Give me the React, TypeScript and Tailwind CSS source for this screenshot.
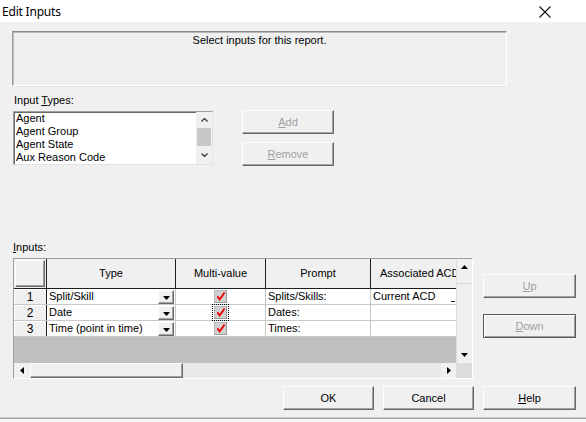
import React from "react";

const raised =
  "bg-[#f0f0f0] border border-t-white border-l-white border-r-[#696969] border-b-[#696969] shadow-[inset_-1px_-1px_0_#a0a0a0]";

function Mn({ c }: { c: string }) {
  return <span className="underline underline-offset-[1px]">{c}</span>;
}

function Btn({
  children,
  w,
  disabled,
  dark,
}: {
  children: React.ReactNode;
  w: string;
  disabled?: boolean;
  dark?: boolean;
}) {
  return (
    <div
      className={`${w} h-[24px] flex items-center justify-center text-[11px] ${
        dark
          ? "bg-[#f0f0f0] border border-[#5a5a5a] shadow-[inset_1px_1px_0_white,inset_-1px_-1px_0_#a0a0a0]"
          : raised
      } ${disabled ? "text-[#a0a0a0]" : "text-black"}`}
    >
      {children}
    </div>
  );
}

function Tri({ dir, className = "" }: { dir: "up" | "down" | "left" | "right"; className?: string }) {
  const pts = {
    up: "0,4 7,4 3.5,0",
    down: "0,0 7,0 3.5,4",
    left: "4,0 4,7 0,3.5",
    right: "0,0 0,7 4,3.5",
  }[dir];
  const vb = dir === "up" || dir === "down" ? "0 0 7 4" : "0 0 4 7";
  const size = dir === "up" || dir === "down" ? "w-[7px] h-[4px]" : "w-[4px] h-[7px]";
  return (
    <svg viewBox={vb} className={`${size} ${className}`}>
      <polygon points={pts} fill="#000" />
    </svg>
  );
}

function Check({ focus }: { focus?: boolean }) {
  return (
    <div className={`p-[1px] ${focus ? "outline outline-1 outline-dotted outline-black" : ""}`}>
      <svg viewBox="0 0 13 13" className="w-[13px] h-[13px] block">
        <rect x="0" y="0" width="13" height="13" fill="#b8b8b8" />
        <rect x="1" y="1" width="11" height="11" fill="#d0d0d0" />
        <line x1="0" y1="12.5" x2="13" y2="12.5" stroke="#9a9a9a" />
        <line x1="12.5" y1="0" x2="12.5" y2="13" stroke="#9a9a9a" />
        <path d="M3.4 6.4 L5.6 9.4 L10.6 2.4" stroke="#ee0000" strokeWidth="1.8" fill="none" />
      </svg>
    </div>
  );
}

const rows = [
  { n: "1", type: "Split/Skill", prompt: "Splits/Skills:", acd: "Current ACD" },
  { n: "2", type: "Date", prompt: "Dates:", acd: "" },
  { n: "3", type: "Time (point in time)", prompt: "Times:", acd: "" },
];

export default function App() {
  return (
    <div className="w-[586px] h-[422px] flex flex-col bg-[#f0f0f0] overflow-hidden font-['Liberation_Sans',Arial,sans-serif] text-black">
      {/* title bar */}
      <div className="h-[22px] bg-white flex items-center justify-between shrink-0">
        <span className="pl-[2px] pt-[1px] text-[12px] leading-none font-['Noto_Sans','Liberation_Sans',sans-serif] tracking-[-0.2px]">
          Edit Inputs
        </span>
        <svg viewBox="0 0 12 12" className="w-[12px] h-[12px] mr-[35px] mt-[2px]">
          <path d="M0.5 0.5 L11.5 11.5 M11.5 0.5 L0.5 11.5" stroke="#111" strokeWidth="1.1" />
        </svg>
      </div>

      <div className="flex-1 px-[12px] pt-[9px] text-[11px]">
        {/* description box */}
        <div className="w-[495px] h-[55px] border border-t-[#8a8a8a] border-l-[#a0a0a0] border-b-white border-r-white shadow-[inset_1px_1px_0_#b9b9b9,0_1px_0_#e3e3e3] flex justify-center pt-[2px] leading-[13px]">
          Select inputs for this report.
        </div>

        <div className="mt-[8px] pl-[2px] h-[13px] leading-[13px]">
          Input <Mn c="T" />ypes:
        </div>

        <div className="mt-[3px] flex">
          <div className="ml-[1px] mt-[1px] w-[200px] h-[54px] bg-white border border-t-[#a0a0a0] border-l-[#a0a0a0] border-b-[#e3e3e3] border-r-[#e3e3e3] shadow-[inset_1px_1px_0_#696969] flex">
            <div className="flex-1 pl-[2px]">
              {["Agent", "Agent Group", "Agent State", "Aux Reason Code"].map((t) => (
                <div key={t} className="h-[13px] leading-[13px]">
                  {t}
                </div>
              ))}
            </div>
            <div className="w-[16px] flex flex-col items-stretch bg-[#f0f0f0]">
              <div className="h-[16px] flex items-center justify-center">
                <svg viewBox="0 0 7 4" className="w-[7px] h-[4px]">
                  <polyline points="0.5,3.5 3.5,0.5 6.5,3.5" fill="none" stroke="#333" strokeWidth="1.2" />
                </svg>
              </div>
              <div className="h-[18px] bg-[#c8c8c8] mx-[1px]" />
              <div className="flex-1 flex items-center justify-center">
                <svg viewBox="0 0 7 4" className="w-[7px] h-[4px]">
                  <polyline points="0.5,0.5 3.5,3.5 6.5,0.5" fill="none" stroke="#333" strokeWidth="1.2" />
                </svg>
              </div>
            </div>
          </div>

          <div className="ml-[29px] flex flex-col gap-[8px]">
            <Btn w="w-[92px]" disabled>
              <Mn c="A" />dd
            </Btn>
            <Btn w="w-[92px]" disabled>
              <Mn c="R" />emove
            </Btn>
          </div>
        </div>

        <div className="mt-[75px] pl-[1px] h-[13px] leading-[13px]">
          <Mn c="I" />nputs:
        </div>

        <div className="mt-[4px] flex">
          {/* grid */}
          <div className="ml-[1px] w-[460px] h-[121px] border border-t-[#a0a0a0] border-l-[#a0a0a0] border-b-white border-r-white shadow-[inset_-1px_-1px_0_#e3e3e3] flex flex-col">
            <div className="flex h-[104px]">
              <div className="w-[442px] flex flex-col bg-[#c0c0c0]">
                {/* header */}
                <div className="flex h-[30px] bg-[#f0f0f0] border-b border-b-[#1e1e1e]">
                  <div className="w-[33px] border-r border-r-[#1e1e1e] p-[1px]">
                    <div className={`w-full h-full ${raised}`} />
                  </div>
                  <div className="w-[129px] border-r border-r-[#1e1e1e] flex items-center justify-center">Type</div>
                  <div className="w-[90px] border-r border-r-[#1e1e1e] flex items-center justify-center">Multi-value</div>
                  <div className="w-[105px] border-r border-r-[#1e1e1e] flex items-center justify-center">Prompt</div>
                  <div className="w-[85px] flex items-center overflow-hidden whitespace-nowrap pl-[9px]">
                    Associated ACD
                  </div>
                </div>
                {rows.map((r, i) => (
                  <div key={r.n} className="flex h-[16px] bg-white border-b border-b-[#c8c8c8] last:border-b-[#1e1e1e]">
                    <div className="w-[33px] bg-[#f0f0f0] border-r border-r-[#1e1e1e] shadow-[inset_0_1px_0_white,inset_1px_0_0_white] flex items-center justify-center leading-none text-[12px]">
                      {r.n}
                    </div>
                    <div className="w-[129px] border-r border-r-[#c8c8c8] flex items-center justify-between pl-[2px] pr-[1px]">
                      <span className="whitespace-nowrap">{r.type}</span>
                      <div className={`w-[16px] h-[14px] flex items-center justify-center ${raised}`}>
                        <Tri dir="down" className="mt-[2px]" />
                      </div>
                    </div>
                    <div className="w-[90px] border-r border-r-[#c8c8c8] flex items-center justify-center pr-[1px]">
                      <Check focus={i === 1} />
                    </div>
                    <div className="w-[105px] border-r border-r-[#c8c8c8] flex items-center pl-[2px] whitespace-nowrap">
                      {r.prompt}
                    </div>
                    <div className="w-[85px] relative flex items-center pl-[2px] whitespace-nowrap">
                      {r.acd}
                      {r.acd && <div className="absolute right-[1px] bottom-[2px] w-[4px] h-[1px] bg-[#222]" />}
                    </div>
                  </div>
                ))}
                <div className="flex-1 bg-[#c0c0c0]" />
              </div>
              {/* vertical scroll */}
              <div className="w-[16px] bg-[#f0f0f0] flex flex-col border-l border-l-[#e0e0e0]">
                <div className="h-[16px] flex items-center justify-center">
                  <Tri dir="up" />
                </div>
                <div className="h-[8px]" />
                <div className="flex-1 border-t border-t-[#d8d8d8]" />
                <div className="h-[16px] flex items-center justify-center">
                  <Tri dir="down" />
                </div>
              </div>
            </div>
            {/* horizontal scroll */}
            <div className="flex flex-1">
              <div className="w-[442px] flex bg-[#e9e9e9]">
                <div className="w-[16px] flex items-center justify-center bg-[#f0f0f0]">
                  <Tri dir="left" />
                </div>
                <div className={`w-[153px] ${raised}`} />
                <div className="flex-1" />
                <div className="w-[15px] flex items-center justify-center bg-[#f0f0f0]">
                  <Tri dir="right" />
                </div>
              </div>
              <div className="flex-1 bg-[#dcdcdc]" />
            </div>
          </div>

          <div className="ml-[10px] pt-[16px] flex flex-col gap-[16px]">
            <Btn w="w-[93px]" disabled>
              <Mn c="U" />p
            </Btn>
            <Btn w="w-[93px]" disabled dark>
              <Mn c="D" />own
            </Btn>
          </div>
        </div>

        <div className="mt-[7px] flex justify-end gap-[9px] mr-[-2px]">
          <Btn w="w-[91px]">OK</Btn>
          <Btn w="w-[91px]">Cancel</Btn>
          <Btn w="w-[93px]">
            <Mn c="H" />elp
          </Btn>
        </div>
      </div>

      <div className="h-[4px] shrink-0 border-t border-t-[#a0a0a0] shadow-[0_-1px_0_#d0d0d0] bg-[#f7f7f7]" />
    </div>
  );
}
